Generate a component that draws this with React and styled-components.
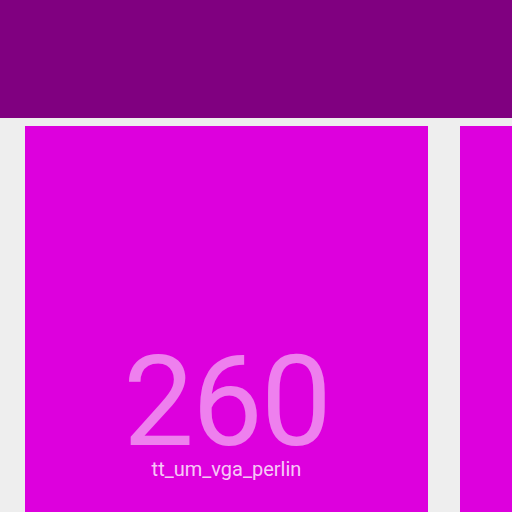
import React from "react";
import styled, { createGlobalStyle } from "styled-components";

const Global = createGlobalStyle`
  html, body { margin: 0; padding: 0; overflow: hidden; background: #eeeeee; }
  body { font-family: Roboto, "Liberation Sans", sans-serif; }
`;

const Header = styled.header`
  height: 118px;
  background: #800080;
`;

const Row = styled.div`
  display: flex;
  gap: 32px;
  padding: 8px 0 0 25px;
  width: max-content;
`;

const Card = styled.div`
  width: 403px;
  height: 403px;
  flex: none;
  background: #dd00dd;
  display: flex;
  flex-direction: column;
  align-items: center;
  padding-top: 226px;
  box-sizing: border-box;
`;

const Count = styled.div`
  font-size: 126px;
  line-height: 100px;
  letter-spacing: -2px;
  color: rgba(255, 255, 255, 0.5);
`;

const Label = styled.div`
  margin-top: 5px;
  font-size: 20px;
  line-height: 24px;
  color: rgba(255, 255, 255, 0.8);
`;

const items = [
  { count: 260, name: "tt_um_vga_perlin" },
  { count: 259, name: "" },
];

export default function App() {
  return (
    <>
      <Global />
      <Header />
      <Row>
        {items.map((it, i) => (
          <Card key={i}>
            {it.name && (
              <>
                <Count>{it.count}</Count>
                <Label>{it.name}</Label>
              </>
            )}
          </Card>
        ))}
      </Row>
    </>
  );
}
